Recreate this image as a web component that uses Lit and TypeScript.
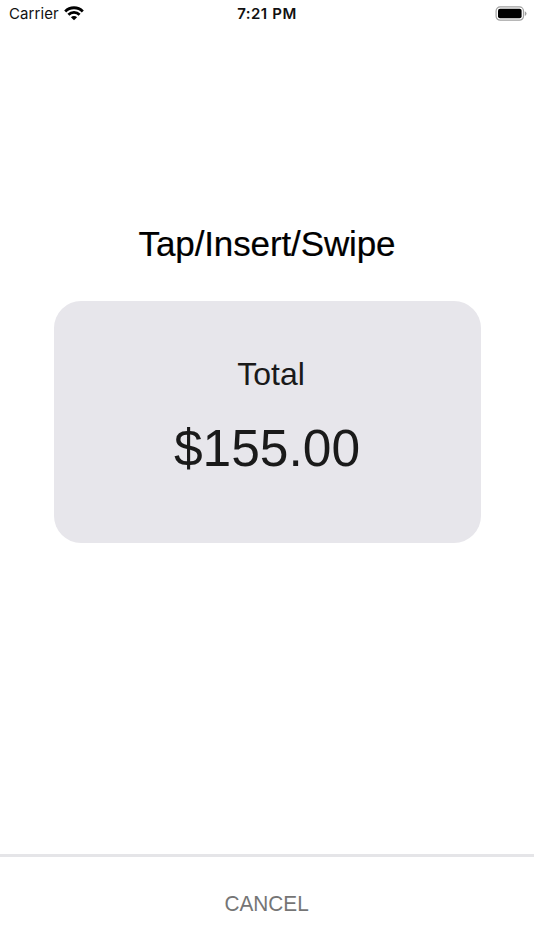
import { LitElement, html, css } from "lit";
import { customElement, property } from "lit/decorators.js";

@customElement("status-bar")
class StatusBar extends LitElement {
  static styles = css`
    :host {
      display: grid;
      grid-template-columns: 1fr auto 1fr;
      align-items: center;
      height: 28px;
      padding: 0 7px 0 9px;
      box-sizing: border-box;
      font: 15px/28px Inter, sans-serif;
      color: #111;
    }
    .left { display: flex; align-items: center; gap: 5px; }
    .carrier { letter-spacing: 0.1px; }
    .time { font-weight: 600; font-size: 15px; letter-spacing: 0.45px; word-spacing: 0.5px; margin-right: 2px; }
    .battery { justify-self: end; }
    svg { display: block; }
    .wifi { margin-bottom: 2px; }
  `;
  render() {
    return html`
      <div class="left">
        <span class="carrier">Carrier</span>
        <svg class="wifi" width="20" height="15" viewBox="0 0 20 15" fill="none" stroke="#000">
          <path d="M1.2 5.4a12.4 12.4 0 0 1 17.6 0" stroke-width="2.8" />
          <path d="M4.4 8.8a7.9 7.9 0 0 1 11.2 0" stroke-width="2.8" />
          <path d="M10 14.3 6.9 11.2a4.4 4.4 0 0 1 6.2 0Z" fill="#000" stroke="none" />
        </svg>
      </div>
      <span class="time">7:21 PM</span>
      <svg class="battery" width="32" height="16" viewBox="0 0 32 16">
        <rect x="1.1" y="0.9" width="27.4" height="13.3" rx="4" fill="none" stroke="#a0a0a0" stroke-width="1.2" />
        <rect x="3" y="2.8" width="23.6" height="9.5" rx="2" />
        <path d="M29.8 5.2q1.7.7 1.7 2.4t-1.7 2.4Z" fill="#a0a0a0" />
      </svg>
    `;
  }
}

@customElement("total-card")
class TotalCard extends LitElement {
  @property() amount = "";
  static styles = css`
    :host {
      display: flex;
      flex-direction: column;
      align-items: center;
      box-sizing: border-box;
      width: 427px;
      height: 242px;
      padding-top: 53px;
      border-radius: 27px;
      background: #e7e6eb;
      color: #1a1a1a;
    }
    .label { padding-left: 8px; font-size: 32px; line-height: 40px; }
    .amount { margin-top: 24px; font-size: 51.5px; line-height: 60px; }
  `;
  render() {
    return html`
      <div class="label">Total</div>
      <div class="amount">${this.amount}</div>
    `;
  }
}

@customElement("app-root")
class AppRoot extends LitElement {
  static styles = css`
    :host {
      display: flex;
      flex-direction: column;
      height: 950px;
      background: #fff;
      font-family: "Liberation Sans", Arial, sans-serif;
    }
    .content {
      flex: 1;
      display: flex;
      flex-direction: column;
      align-items: center;
      padding-top: 196px;
    }
    .title {
      margin: 0 0 37px;
      font-size: 35px;
      line-height: 40px;
      font-weight: 400;
      letter-spacing: -0.12px;
      color: #000;
      -webkit-text-stroke: 0.2px #000;
    }
    .cancel {
      display: block;
      height: 96px;
      padding: 0;
      border: 0;
      border-top: 3px solid #e5e5e8;
      background: #fff;
      color: #757575;
      font: 22px/93px "Liberation Sans", Arial, sans-serif;
    }
    .cancel span { display: inline-block; transform: scaleX(0.945); }
  `;
  render() {
    return html`
      <status-bar></status-bar>
      <main class="content">
        <h1 class="title">Tap/Insert/Swipe</h1>
        <total-card amount="$155.00"></total-card>
      </main>
      <button class="cancel"><span>CANCEL</span></button>
    `;
  }
}
